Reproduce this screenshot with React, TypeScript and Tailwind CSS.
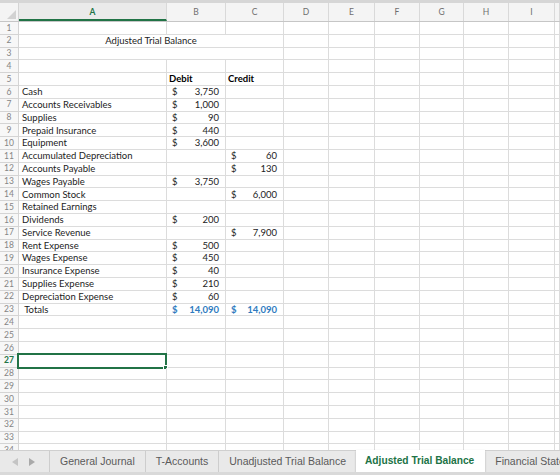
const COLS = ['A', 'B', 'C', 'D', 'E', 'F', 'G', 'H', 'I', ''];
const GRID = 'grid grid-cols-[19px_148px_59px_58px_45px_46px_45px_44px_45px_46px_1fr]';

type Amount = { col: 'B' | 'C'; value: string };
type Row = { label?: string; amount?: Amount; total?: boolean };

const DATA: Record<number, Row> = {
  6: { label: 'Cash', amount: { col: 'B', value: '3,750' } },
  7: { label: 'Accounts Receivables', amount: { col: 'B', value: '1,000' } },
  8: { label: 'Supplies', amount: { col: 'B', value: '90' } },
  9: { label: 'Prepaid Insurance', amount: { col: 'B', value: '440' } },
  10: { label: 'Equipment', amount: { col: 'B', value: '3,600' } },
  11: { label: 'Accumulated Depreciation', amount: { col: 'C', value: '60' } },
  12: { label: 'Accounts Payable', amount: { col: 'C', value: '130' } },
  13: { label: 'Wages Payable', amount: { col: 'B', value: '3,750' } },
  14: { label: 'Common Stock', amount: { col: 'C', value: '6,000' } },
  15: { label: 'Retained Earnings' },
  16: { label: 'Dividends', amount: { col: 'B', value: '200' } },
  17: { label: 'Service Revenue', amount: { col: 'C', value: '7,900' } },
  18: { label: 'Rent Expense', amount: { col: 'B', value: '500' } },
  19: { label: 'Wages Expense', amount: { col: 'B', value: '450' } },
  20: { label: 'Insurance Expense', amount: { col: 'B', value: '40' } },
  21: { label: 'Supplies Expense', amount: { col: 'B', value: '210' } },
  22: { label: 'Depreciation Expense', amount: { col: 'B', value: '60' } },
  23: { label: 'Totals', total: true },
};

const TABS = ['General Journal', 'T-Accounts', 'Unadjusted Trial Balance', 'Adjusted Trial Balance', 'Financial Statements'];
const ACTIVE_TAB = 'Adjusted Trial Balance';
const SELECTED_ROW = 27;

const cell = 'h-[12.8px] border-b border-r border-[#dcdcdc] overflow-visible whitespace-nowrap';

function Money({ value, total }: { value: string; total?: boolean }) {
  return (
    <span
      className={`flex h-full items-center justify-between pl-[5px] pr-[6px] ${
        total ? 'font-bold text-[#2f7bc0]' : 'text-[#1c1c1c]'
      }`}
    >
      <span>$</span>
      <span>{value}</span>
    </span>
  );
}

function RowNumber({ n }: { n: number }) {
  const selected = n === SELECTED_ROW;
  return (
    <div
      className={`flex h-[12.8px] items-center justify-center border-b border-r border-[#d4d4d4] bg-[#f7f7f7] text-[8.5px] ${
        selected ? 'font-bold text-[#217346]' : 'text-[#858585]'
      }`}
    >
      {n}
    </div>
  );
}

function SheetRow({ n }: { n: number }) {
  const row = DATA[n];

  if (n === 2 || n === 3) {
    return (
      <>
        <RowNumber n={n} />
        <div className={`${cell} col-span-3 flex items-center justify-center text-[#1c1c1c]`}>
          {n === 2 ? 'Adjusted Trial Balance' : ''}
        </div>
        {COLS.slice(3).map((c) => (
          <div key={c || 'J'} className={cell} />
        ))}
      </>
    );
  }

  return (
    <>
      <RowNumber n={n} />
      <div className={`${cell} relative flex items-center pl-[3px] text-[#1c1c1c]`}>
        {row?.label && (row.total ? `\u00a0${row.label}` : row.label)}
        {n === SELECTED_ROW && (
          <span className="absolute -left-[2px] -top-[2px] h-[15.8px] w-[150px] border-2 border-[#217346]">
            <span className="absolute -bottom-[3px] -right-[3px] h-[5px] w-[5px] border border-white bg-[#217346]" />
          </span>
        )}
      </div>
      <div className={`${cell} ${n === 5 ? 'flex items-center pl-[2px] font-bold' : ''}`}>
        {n === 5 && 'Debit'}
        {row?.amount?.col === 'B' && <Money value={row.amount.value} />}
        {row?.total && <Money value="14,090" total />}
      </div>
      <div className={`${cell} ${n === 5 ? 'flex items-center pl-[2px] font-bold' : ''}`}>
        {n === 5 && 'Credit'}
        {row?.amount?.col === 'C' && <Money value={row.amount.value} />}
        {row?.total && <Money value="14,090" total />}
      </div>
      {COLS.slice(3).map((c) => (
        <div key={c || 'J'} className={cell} />
      ))}
    </>
  );
}

export default function App() {
  const rows = Array.from({ length: 34 }, (_, i) => i + 1);

  return (
    <div className="flex h-[475px] w-[560px] flex-col overflow-hidden bg-white font-['Lato',sans-serif] text-[9.5px] leading-none">
      <div className="h-[3px] shrink-0 bg-[#d6d6d6]" />

      <div className={`${GRID} h-[19px] shrink-0 border-b border-[#c6c6c6] bg-[#f4f4f4] text-[8.5px] text-[#6f6f6f]`}>
        <div className="relative border-r border-[#d4d4d4]">
          <svg className="absolute bottom-[2px] right-[2px]" width="9" height="9" viewBox="0 0 9 9">
            <path d="M9 0 L9 9 L0 9 Z" fill="#d2d2d2" />
          </svg>
        </div>
        {COLS.map((c) => (
          <div
            key={c || 'J'}
            className={`flex items-center justify-center border-r border-[#d9d9d9] ${
              c === 'A' ? 'border-b-2 border-b-[#217346] bg-[#eaeaea] pt-[2px] font-bold text-[#217346]' : ''
            }`}
          >
            {c}
          </div>
        ))}
      </div>

      <div className="min-h-0 flex-1 overflow-hidden">
        <div className={GRID}>
          {rows.map((n) => (
            <SheetRow key={n} n={n} />
          ))}
        </div>
      </div>

      <div className="flex h-[22px] shrink-0 items-stretch border-t border-[#cfcfcf] bg-[#e9e9e9] font-['Liberation_Sans',sans-serif] text-[10.5px] text-[#5a5a5a]">
        <div className="flex w-[50px] shrink-0 items-center gap-[11px] border-r border-[#cdcdcd] pl-[12px]">
          <svg width="6" height="8" viewBox="0 0 6 8">
            <path d="M6 0 L6 8 L0 4 Z" fill="#c4c4c4" />
          </svg>
          <svg width="6" height="8" viewBox="0 0 6 8">
            <path d="M0 0 L0 8 L6 4 Z" fill="#a9a9a9" />
          </svg>
        </div>
        {TABS.map((t, i) => {
          const active = t === ACTIVE_TAB;
          const beforeActive = TABS[i + 1] === ACTIVE_TAB;
          return (
            <div
              key={t}
              className={`flex shrink-0 items-center whitespace-nowrap ${
                active
                  ? '-mt-px bg-white pl-[9px] pr-[11px] text-[10.2px] font-bold text-[#217346] shadow-[0_1px_2px_rgba(0,0,0,0.25)]'
                  : beforeActive || i === TABS.length - 1
                    ? 'px-[10px]'
                    : 'border-r border-[#cdcdcd] px-[10px]'
              }`}
            >
              {t}
            </div>
          );
        })}
      </div>
      <div className="h-[3px] shrink-0 bg-[#d9d9d9]" />
    </div>
  );
}
